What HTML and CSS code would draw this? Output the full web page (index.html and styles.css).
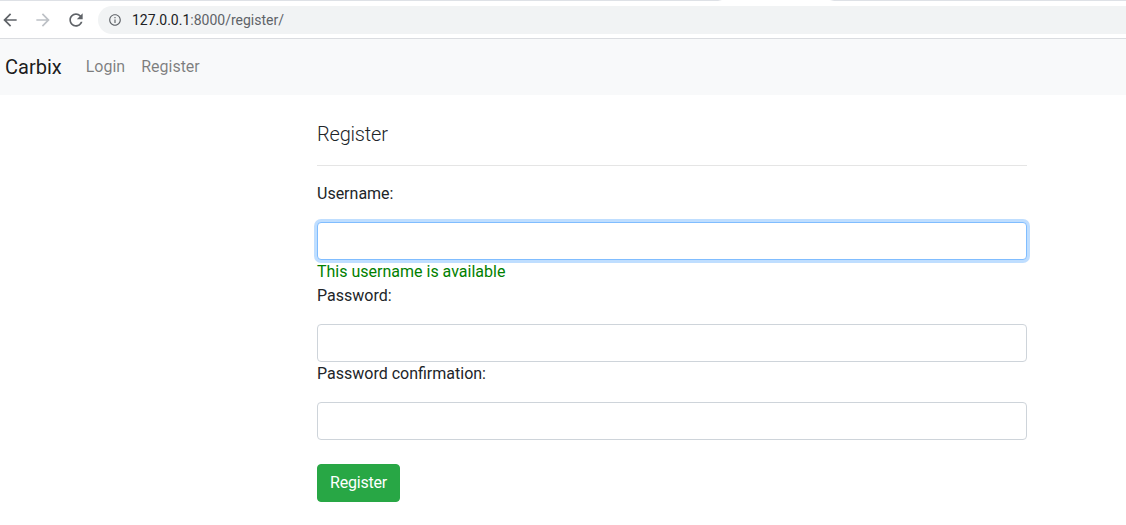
FILE: index.html
```html
<!DOCTYPE html>
<html lang="en">
<head>
<meta charset="utf-8">
<title>Register</title>
<link rel="stylesheet" href="styles.css">
</head>
<body>
<div class="chrome">
  <div class="tabline"></div>
  <div class="toolbar">
    <span class="tb-btn">
      <svg viewBox="0 0 24 24" width="20" height="20"><path fill="#5f6368" d="M20 11H7.83l5.59-5.59L12 4l-8 8 8 8 1.41-1.41L7.83 13H20v-2z"/></svg>
    </span>
    <span class="tb-btn">
      <svg viewBox="0 0 24 24" width="20" height="20"><path fill="#bdc1c6" d="M12 4l-1.41 1.41L16.17 11H4v2h12.17l-5.58 5.59L12 20l8-8z"/></svg>
    </span>
    <span class="tb-btn">
      <svg viewBox="0 0 24 24" width="20" height="20"><path fill="#5f6368" d="M17.65 6.35C16.2 4.9 14.21 4 12 4c-4.42 0-7.99 3.58-7.99 8s3.57 8 7.99 8c3.73 0 6.84-2.55 7.73-6h-2.08c-.82 2.33-3.04 4-5.65 4-3.31 0-6-2.69-6-6s2.69-6 6-6c1.66 0 3.14.69 4.22 1.78L13 11h7V4l-2.35 2.35z"/></svg>
    </span>
    <div class="omnibox">
      <svg class="info" viewBox="0 0 24 24" width="14" height="14"><path fill="#5f6368" d="M11 7h2v2h-2zm0 4h2v6h-2zm1-9C6.48 2 2 6.48 2 12s4.48 10 10 10 10-4.48 10-10S17.52 2 12 2zm0 18c-4.41 0-8-3.59-8-8s3.59-8 8-8 8 3.59 8 8-3.59 8-8 8z"/></svg>
      <span class="url"><span class="host">127.0.0.1</span>:8000/register/</span>
    </div>
  </div>
</div>

<nav class="navbar">
  <a class="brand" href="#">Carbix</a>
  <a class="nav-link" href="#">Login</a>
  <a class="nav-link" href="#">Register</a>
</nav>

<main class="main">
  <h4 class="title">Register</h4>
  <hr class="rule">
  <form class="form">
    <label class="label" for="id_username">Username:</label>
    <input class="input focused" id="id_username" type="text">
    <div class="available">This username is available</div>
    <label class="label" for="id_password1">Password:</label>
    <input class="input" id="id_password1" type="password">
    <label class="label" for="id_password2">Password confirmation:</label>
    <input class="input" id="id_password2" type="password">
    <button class="btn" type="button">Register</button>
  </form>
</main>
</body>
</html>
```

FILE: styles.css
```css
* { box-sizing: border-box; }

html, body {
  margin: 0;
  padding: 0;
  background: #fff;
  overflow: hidden;
}

body {
  font-family: Roboto, "Liberation Sans", sans-serif;
  font-size: 16px;
  line-height: 24px;
  color: #212529;
}

/* browser chrome */
.chrome {
  height: 39px;
  border-bottom: 1px solid #dadce0;
  background: #fff;
}

.tabline {
  height: 1px;
  background: linear-gradient(to right,
    #dee1e6 0, #dee1e6 718px,
    #fff 722px, #fff 830px,
    #dee1e6 834px, #dee1e6 100%);
}

.toolbar {
  height: 37px;
  display: flex;
  align-items: center;
}

.tb-btn {
  width: 20px;
  height: 20px;
  display: flex;
  margin-right: 13px;
}
.tb-btn:nth-child(3) { margin-right: 12px; }

.tb-btn svg { display: block; }

.omnibox {
  flex: 1;
  height: 28px;
  background: #f1f3f4;
  border-radius: 14px 0 0 14px;
  display: flex;
  align-items: center;
  padding-left: 10px;
}

.info {
  display: block;
  margin-right: 10px;
}

.url {
  font-size: 14px;
  line-height: 20px;
  color: #5f6368;
}
.host { color: #202124; }

/* navbar */
.navbar {
  height: 56px;
  background: #f8f9fa;
  display: flex;
  align-items: center;
  padding: 8px 5px;
}

.brand {
  font-size: 20px;
  line-height: 30px;
  padding: 5px 0;
  margin-right: 16px;
  color: rgba(0, 0, 0, .9);
  text-decoration: none;
}

.nav-link {
  padding: 8px;
  color: rgba(0, 0, 0, .5);
  text-decoration: none;
}

/* main */
.main {
  width: 710px;
  margin-left: 317px;
  padding-top: 27px;
}

.title {
  margin: 0;
  font-size: 20px;
  line-height: 24px;
  font-weight: 300;
  letter-spacing: -0.2px;
}

.rule {
  margin: 19px 0 16px;
  border: 0;
  border-top: 1px solid rgba(0, 0, 0, .1);
}

.form {
  display: flex;
  flex-direction: column;
  align-items: flex-start;
}

.label {
  display: block;
  margin-bottom: 16px;
}

.input {
  width: 100%;
  height: 38px;
  padding: 6px 12px;
  font: inherit;
  color: #495057;
  background: #fff;
  border: 1px solid #ced4da;
  border-radius: 4px;
  outline: none;
}

.input.focused {
  border-color: #80bdff;
  box-shadow: 0 0 0 3px rgba(0, 123, 255, .25);
}

.available {
  color: green;
}

.btn {
  margin-top: 24px;
  height: 38px;
  padding: 6px 12px;
  font: inherit;
  letter-spacing: -0.2px;
  color: #fff;
  background: #28a745;
  border: 1px solid #28a745;
  border-radius: 4px;
}
```
